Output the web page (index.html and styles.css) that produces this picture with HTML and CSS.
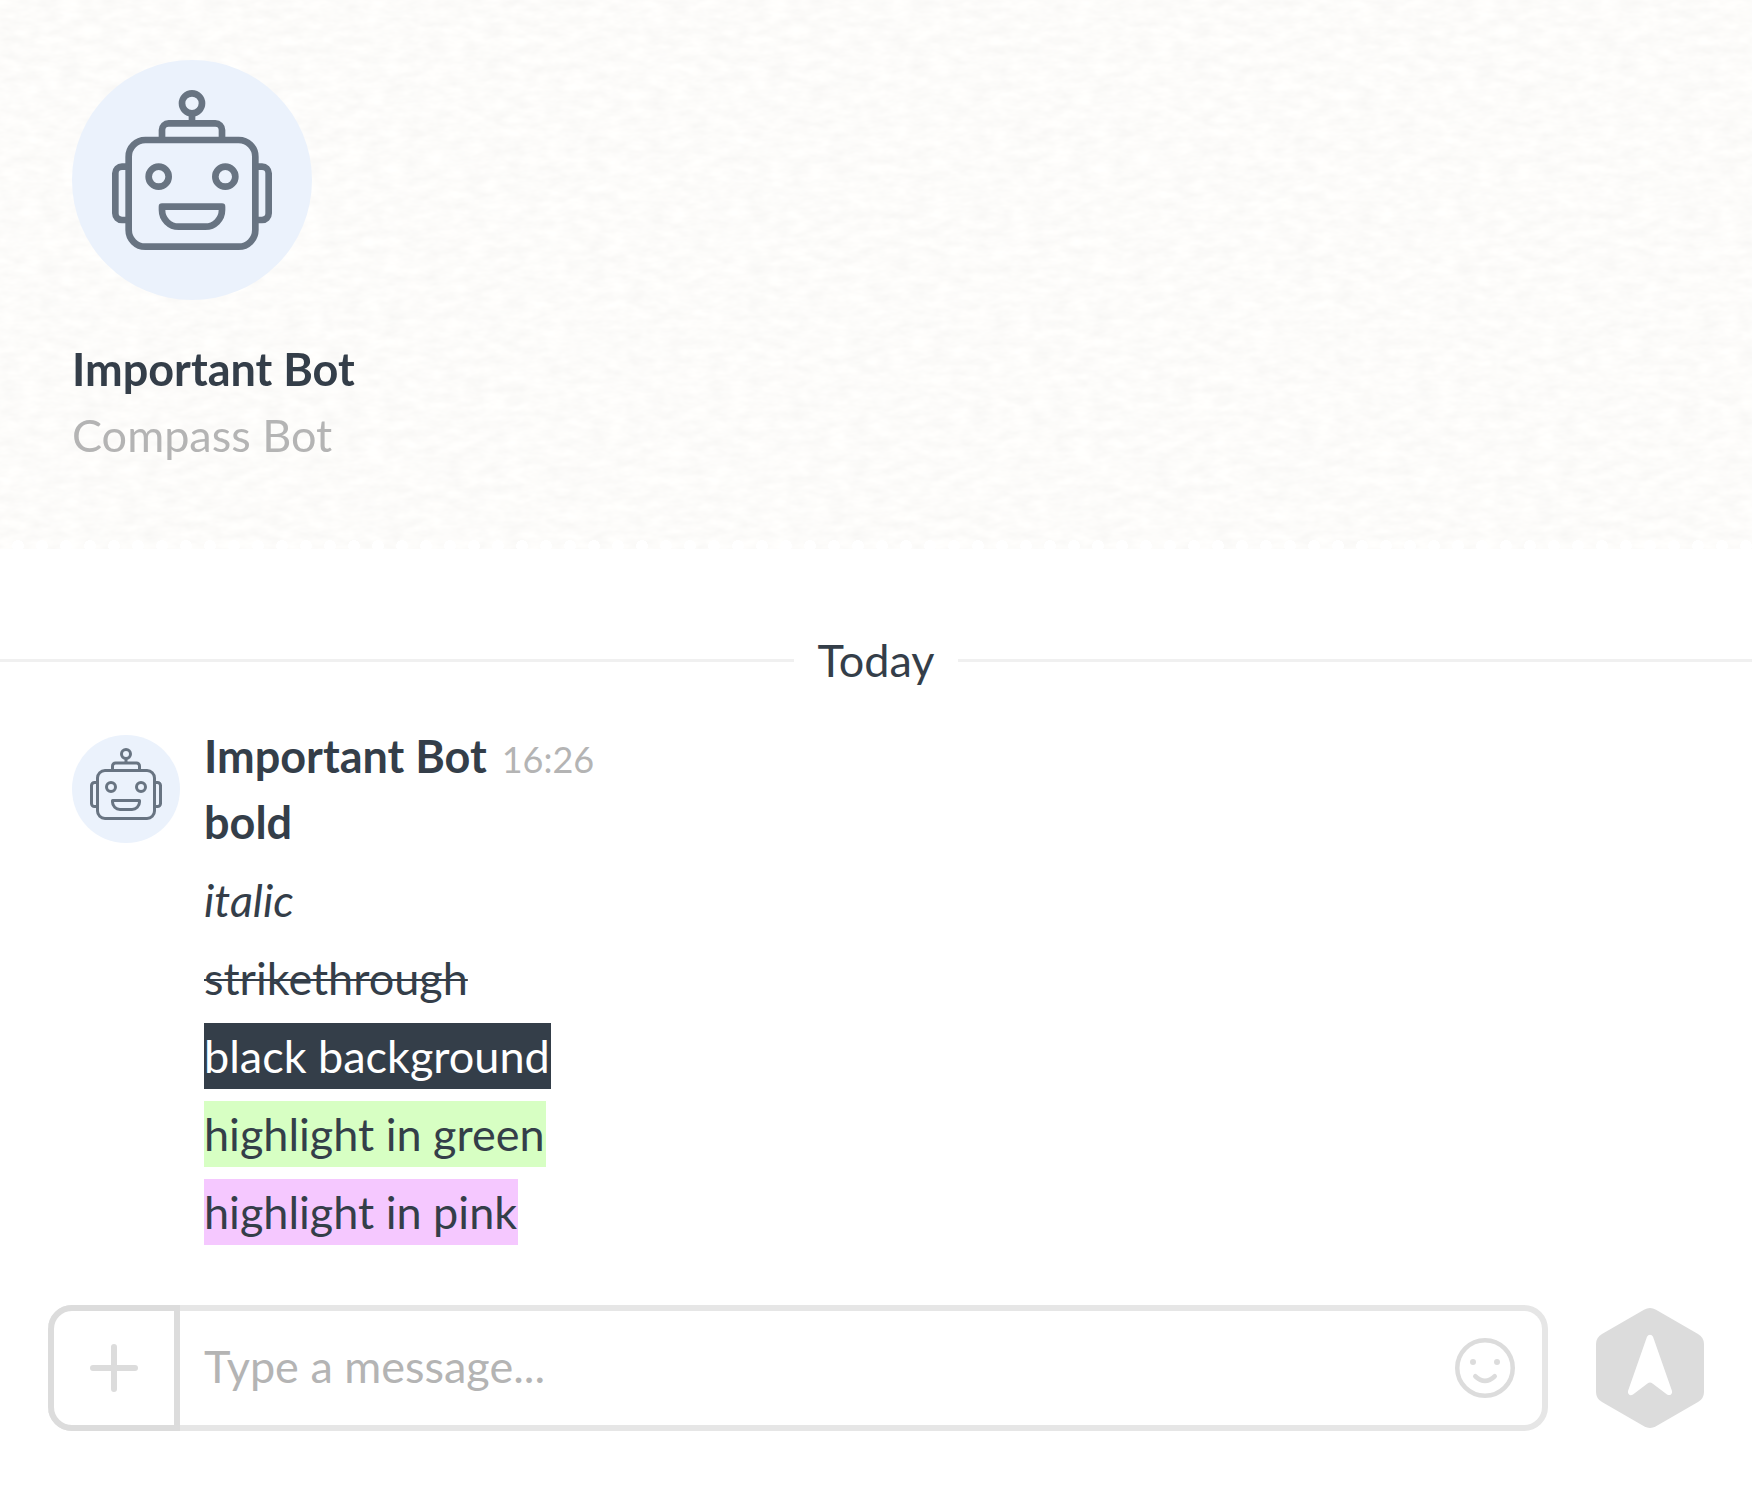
FILE: index.html
```html
<!DOCTYPE html>
<html lang="en">
<head>
<meta charset="utf-8">
<meta name="viewport" content="width=device-width, initial-scale=1">
<title>Important Bot</title>
<link rel="stylesheet" href="styles.css">
</head>
<body>
<svg class="symbols" aria-hidden="true">
  <symbol id="robot" viewBox="0 0 24 24">
    <g fill="none" stroke="currentColor" stroke-width="1" stroke-linejoin="round">
      <circle cx="12" cy="2" r="1.5"/>
      <path d="M12 3.5V5M7.5 7.5V6a1 1 0 0 1 1-1h7a1 1 0 0 1 1 1v1.500"/>
      <rect x="2.500" y="7.500" width="19" height="16" rx="2.500"/>
      <circle cx="7" cy="13" r="1.500"/>
      <circle cx="17" cy="13" r="1.500"/>
      <path d="M7.500 17.500h9v.5a2.500 2.500 0 0 1-2.500 2.500h-4a2.500 2.500 0 0 1-2.500-2.500z"/>
      <path d="M2.500 11.500h-1a1 1 0 0 0-1 1v6a1 1 0 0 0 1 1h1M21.500 11.500h1a1 1 0 0 1 1 1v6a1 1 0 0 1-1 1h-1"/>
    </g>
  </symbol>
</svg>
<main class="chat">
  <header class="profile">
    <div class="avatar avatar-large"><svg class="avatar-icon" aria-hidden="true"><use href="#robot"/></svg></div>
    <h1 class="profile-name">Important Bot</h1>
    <p class="profile-role">Compass Bot</p>
  </header>
  <div class="day"><span>Today</span></div>
  <article class="message">
    <div class="avatar avatar-small"><svg class="avatar-icon" aria-hidden="true"><use href="#robot"/></svg></div>
    <div class="message-main">
      <div class="message-head"><h2 class="author">Important Bot</h2><time class="time">16:26</time></div>
      <div class="message-body">
        <p><strong>bold</strong></p>
        <p><em>italic</em></p>
        <p><s>strikethrough</s></p>
        <p class="mark mark-black">black background</p>
        <p class="mark mark-green">highlight in green</p>
        <p class="mark mark-pink">highlight in pink</p>
      </div>
    </div>
  </article>
  <form class="composer">
    <div class="field">
      <button class="attach" type="button" aria-label="Add attachment">
        <svg width="48" height="48" viewBox="0 0 48 48"><path d="M24 3v42M3 24h42" fill="none" stroke="currentColor" stroke-width="6" stroke-linecap="round"/></svg>
      </button>
      <input class="input" type="text" placeholder="Type a message..." aria-label="Message">
      <button class="emoji" type="button" aria-label="Insert emoji">
        <svg width="60" height="60" viewBox="0 0 60 60"><g fill="none" stroke="currentColor" stroke-width="4.500" stroke-linecap="round"><circle cx="30" cy="30" r="27.750"/><path d="M20.250 38.250Q30 47.500 39.750 38.250"/></g><circle cx="18" cy="24" r="3" fill="currentColor"/><circle cx="42" cy="24" r="3" fill="currentColor"/></svg>
      </button>
    </div>
    <button class="send" type="submit" aria-label="Send">
      <svg width="108" height="120" viewBox="0 0 108 120"><path d="M48 1.700Q54-1.700 60 1.700L102 26Q108 29.500 108 36V84Q108 90.500 102 94L60 118.300Q54 121.700 48 118.300L6 94Q0 90.500 0 84V36Q0 29.500 6 26Z" fill="currentColor"/><path d="M51 28.800Q52 26.700 54 26.700T57 28.800L76 83Q76.500 85.500 75 86.500T71 86.500L56.500 75.500Q54 73.500 51.500 75.500L37 86.500Q34.500 87.800 33 86.500T32 83Z" fill="#fff"/></svg>
    </button>
  </form>
</main>
</body>
</html>
```
FILE: styles.css
```css
* { box-sizing: border-box; }

body {
  margin: 0;
  background: #fff;
  color: #343e49;
  font: 45px/66px Lato, "Open Sans", sans-serif;
}

h1, h2, p { margin: 0; font-size: inherit; }
button { padding: 0; border: 0; background: none; color: #dcdcdc; cursor: pointer; }
button svg { display: block; }
.symbols { position: absolute; width: 0; height: 0; }

.chat { display: flex; flex-direction: column; min-height: 100vh; }

.profile {
  padding: 60px 72px 81px;
  background-color: #fcfcfa;
  background-image: url("data:image/svg+xml,%3Csvg xmlns='http://www.w3.org/2000/svg' width='708' height='549'%3E%3Cfilter id='p' x='0' y='0' width='100%25' height='100%25' color-interpolation-filters='sRGB'%3E%3CfeTurbulence type='fractalNoise' baseFrequency='.05 .11' numOctaves='3' seed='4' stitchTiles='stitch'/%3E%3CfeColorMatrix values='.045 0 0 0 .968 .045 0 0 0 .965 .045 0 0 0 .958 0 0 0 0 1'/%3E%3C/filter%3E%3Crect width='708' height='549' filter='url(%23p)'/%3E%3C/svg%3E");
  -webkit-mask: radial-gradient(6px 6px at 18px 6px, transparent 98%, #000) 0 100% / 24px 9px repeat-x, linear-gradient(#000 0 0) 0 0 / 100% calc(100% - 9px) no-repeat;
}

.avatar { border-radius: 50%; background: #ebf2fc; color: #687482; flex: none; }
.avatar-icon { display: block; margin: 0 auto; }
.avatar-large { width: 240px; height: 240px; padding-top: 30px; margin-bottom: 36px; }
.avatar-large .avatar-icon { width: 160px; height: 160px; }
.avatar-small { width: 108px; height: 108px; padding-top: 13px; margin-top: 12px; }
.avatar-small .avatar-icon { width: 72px; height: 72px; }
.profile-role { color: #b4b4b4; }

.day { display: flex; align-items: center; gap: 24px; margin: 78px 0 30px; }
.day::before, .day::after { content: ""; flex: 1; height: 3px; background: #f0f0f0; }

.message { display: flex; gap: 24px; padding: 0 72px; }
.message-head { display: flex; align-items: baseline; gap: 15px; }
.time { color: #b4b4b4; font-size: 36px; line-height: 48px; }
.message-body { display: flex; flex-direction: column; align-items: flex-start; gap: 12px; }
.message-body s { text-decoration-thickness: 2px; }
.mark { padding-right: 1px; }
.mark-black { background: #343e49; color: #fff; }
.mark-green { background: #d7ffc3; }
.mark-pink { background: #f5c8ff; }

.composer { display: flex; align-items: center; gap: 48px; padding: 60px 48px; margin-top: auto; }
.field {
  display: flex;
  flex: 1;
  height: 126px;
  border: 6px solid #e6e6e6;
  border-left: 0;
  border-radius: 24px;
}
.attach {
  display: grid;
  place-items: center;
  width: 132px;
  margin: -6px 0;
  border: 6px solid #dcdcdc;
  border-radius: 24px 0 0 24px;
}
.input {
  flex: 1;
  min-width: 0;
  padding: 0 24px 4px;
  border: 0;
  outline: 0;
  background: none;
  color: inherit;
  font: inherit;
}
.input::placeholder { color: #b4b4b4; opacity: 1; }
.emoji { padding: 0 27px 0 0; }
.send { flex: none; }
```
